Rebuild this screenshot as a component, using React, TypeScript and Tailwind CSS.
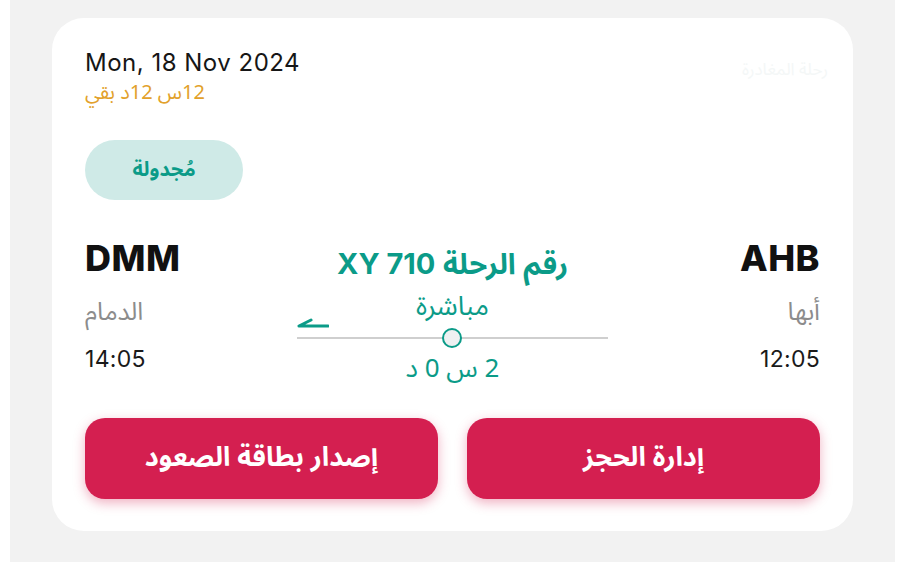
import React from "react";

const latin = "font-['Inter','Noto_Sans','DejaVu_Sans',sans-serif]";
const arabic = "font-['Noto_Sans_Arabic','DejaVu_Sans',sans-serif]";

function Harpoon() {
  return (
    <svg width="32" height="12" viewBox="0 0 32 12" aria-hidden>
      <path d="M2 9 L31 9 M2 9 L14 3" stroke="#0b9b88" strokeWidth="3" strokeLinecap="round" fill="none" />
    </svg>
  );
}

export default function App() {
  return (
    <div className="w-full h-[562px] bg-white flex">
      <div className="ml-[10px] mr-[4px] flex-1 h-full bg-[#f2f2f2] px-[42px] pt-[18px]">
        <div className="bg-white rounded-[32px] px-[33px] pt-[30px] pb-[32px]">
          <div className="flex justify-between items-start">
            <div className="flex flex-col items-start">
              <div className={`${latin} text-[24px] leading-[30px] tracking-[0.5px] text-[#161616]`}>Mon, 18 Nov 2024</div>
              <div dir="rtl" className={`${arabic} text-[20px] leading-[30px] text-[#e2a12b]`}>
                12س 12د بقي
              </div>
            </div>
            <div className="pt-[12px] mr-[-8px]">
              <div dir="rtl" className={`${arabic} text-[17px] leading-[20px] text-[#f4f7f7]`}>رحلة المغادرة</div>
            </div>
          </div>

          <div className="mt-[32px] w-[158px] h-[60px] rounded-full bg-[#cfeae7] flex items-center justify-center">
            <span dir="rtl" className={`${arabic} text-[20px] font-bold text-[#0b9b88]`}>مُجدولة</span>
          </div>

          <div className="mt-[38px] grid grid-cols-[1fr_311px_1fr] items-start">
            <div className="flex flex-col items-start">
              <div className={`${latin} text-[36px] leading-[40px] font-extrabold tracking-[0.5px] text-[#111]`}>DMM</div>
              <div dir="rtl" className={`${arabic} mt-[16px] text-[25px] leading-[36px] text-[#8c8c8c]`}>الدمام</div>
              <div className={`${latin} mt-[14px] text-[23px] leading-[30px] tracking-[0.3px] text-[#1a1a1a]`}>14:05</div>
            </div>

            <div className="flex flex-col items-center">
              <div dir="rtl" className={`${arabic} mt-[6px] text-[29px] leading-[40px] font-bold text-[#0b9b88]`}>
                رقم الرحلة <span className={latin}>XY 710</span>
              </div>
              <div dir="rtl" className={`${arabic} mt-[4px] text-[27px] leading-[36px] text-[#0b9b88]`}>مباشرة</div>
              <div className="relative w-full h-[26px] flex items-center">
                <div className="absolute left-0 top-[-8px]">
                  <Harpoon />
                </div>
                <div className="w-full h-[2px] bg-[#cfcfcf]" />
                <div className="absolute left-[145px] top-[3px] w-[20px] h-[20px] rounded-full border-2 border-[#0b9b88] bg-[#eef0f1]" />
              </div>
              <div dir="rtl" className={`${arabic} text-[26px] leading-[36px] text-[#0b9b88]`}>2 س 0 د</div>
            </div>

            <div className="flex flex-col items-end">
              <div className={`${latin} text-[36px] leading-[40px] font-extrabold tracking-[0.5px] text-[#111]`}>AHB</div>
              <div dir="rtl" className={`${arabic} mt-[16px] text-[25px] leading-[36px] text-[#8c8c8c]`}>أبها</div>
              <div className={`${latin} mt-[14px] text-[23px] leading-[30px] tracking-[0.3px] text-[#1a1a1a]`}>12:05</div>
            </div>
          </div>

          <div className="mt-[31px] grid grid-cols-2 gap-[29px]">
            <button
              type="button"
              className={`${arabic} h-[81px] rounded-[20px] bg-[#d41f50] text-white text-[27px] font-bold shadow-[0_4px_12px_rgba(212,31,80,0.35)]`}
              dir="rtl"
            >
              إصدار بطاقة الصعود
            </button>
            <button
              type="button"
              className={`${arabic} h-[81px] rounded-[20px] bg-[#d41f50] text-white text-[27px] font-bold shadow-[0_4px_12px_rgba(212,31,80,0.35)]`}
              dir="rtl"
            >
              إدارة الحجز
            </button>
          </div>
        </div>
      </div>
    </div>
  );
}
